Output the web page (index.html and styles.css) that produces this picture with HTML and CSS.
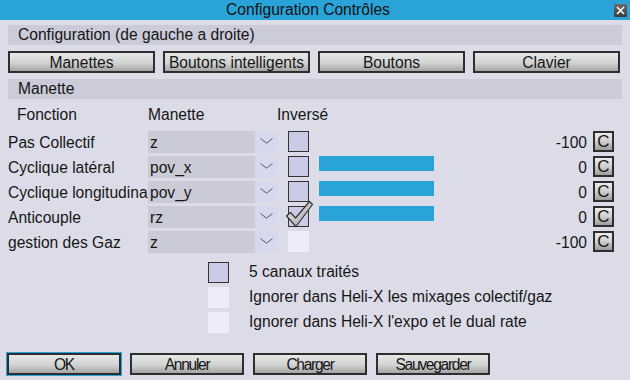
FILE: index.html
```html
<!DOCTYPE html>
<html lang="fr">
<head>
    <meta charset="UTF-8">
    <title>Configuration Contrôles</title>
    <link rel="stylesheet" href="styles.css">
</head>
<body>
    <div class="window">
        <div class="titlebar">
            <span class="title">Configuration Contrôles</span>
            <span class="close">
                <svg width="13" height="13" viewBox="0 0 13 13">
                    <path d="M3 3 L10 10 M10 3 L3 10" stroke="#fff" stroke-width="1.6" fill="none"/>
                </svg>
            </span>
        </div>
        <div class="content">
            <div class="section-head">Configuration (de gauche a droite)</div>
            <div class="tabs">
                <button class="btn">Manettes</button>
                <button class="btn">Boutons intelligents</button>
                <button class="btn">Boutons</button>
                <button class="btn">Clavier</button>
            </div>
            <div class="section-head">Manette</div>
            <div class="col-heads">
                <span class="head-fn">Fonction</span>
                <span class="head-axis">Manette</span>
                <span class="head-inv">Inversé</span>
            </div>

            <div class="channel">
                <span class="ch-name">Pas Collectif</span>
                <div class="select"><span class="select-value">z</span><span class="select-arrow"><svg width="13" height="6" viewBox="0 0 13 6"><path d="M0.5 0.5 L6.5 5.2 L12.5 0.5" stroke="#5a5a5a" fill="none"/></svg></span></div>
                <span class="invert"></span>
                <span class="bar bar-off"></span>
                <span class="value">-100</span>
                <button class="cbtn">C</button>
            </div>
            <div class="channel">
                <span class="ch-name">Cyclique latéral</span>
                <div class="select"><span class="select-value">pov_x</span><span class="select-arrow"><svg width="13" height="6" viewBox="0 0 13 6"><path d="M0.5 0.5 L6.5 5.2 L12.5 0.5" stroke="#5a5a5a" fill="none"/></svg></span></div>
                <span class="invert"></span>
                <span class="bar"></span>
                <span class="value">0</span>
                <button class="cbtn">C</button>
            </div>
            <div class="channel">
                <span class="ch-name">Cyclique longitudinal</span>
                <div class="select"><span class="select-value">pov_y</span><span class="select-arrow"><svg width="13" height="6" viewBox="0 0 13 6"><path d="M0.5 0.5 L6.5 5.2 L12.5 0.5" stroke="#5a5a5a" fill="none"/></svg></span></div>
                <span class="invert"></span>
                <span class="bar"></span>
                <span class="value">0</span>
                <button class="cbtn">C</button>
            </div>
            <div class="channel">
                <span class="ch-name">Anticouple</span>
                <div class="select"><span class="select-value">rz</span><span class="select-arrow"><svg width="13" height="6" viewBox="0 0 13 6"><path d="M0.5 0.5 L6.5 5.2 L12.5 0.5" stroke="#5a5a5a" fill="none"/></svg></span></div>
                <span class="invert checked">
                    <svg class="tick" width="29" height="28" viewBox="0 0 29 28">
                        <defs>
                            <linearGradient id="tickfill" x1="0" y1="0" x2="1" y2="1">
                                <stop offset="0" stop-color="#f4f4f4"/>
                                <stop offset="1" stop-color="#9a9a9a"/>
                            </linearGradient>
                        </defs>
                        <path d="M1.5 16 L5.5 12.5 L10.5 18 L24.5 1.5 L27.5 4.5 L11 26.5 Z" fill="url(#tickfill)" stroke="#333" stroke-width="1.2" stroke-linejoin="round"/>
                    </svg>
                </span>
                <span class="bar"></span>
                <span class="value">0</span>
                <button class="cbtn">C</button>
            </div>
            <div class="channel">
                <span class="ch-name">gestion des Gaz</span>
                <div class="select"><span class="select-value">z</span><span class="select-arrow"><svg width="13" height="6" viewBox="0 0 13 6"><path d="M0.5 0.5 L6.5 5.2 L12.5 0.5" stroke="#5a5a5a" fill="none"/></svg></span></div>
                <span class="invert disabled"></span>
                <span class="bar bar-off"></span>
                <span class="value">-100</span>
                <button class="cbtn">C</button>
            </div>

            <div class="options">
                <label class="option"><span class="box"></span>5 canaux traités</label>
                <label class="option"><span class="box disabled"></span>Ignorer dans Heli-X les mixages colectif/gaz</label>
                <label class="option"><span class="box disabled"></span>Ignorer dans Heli-X l'expo et le dual rate</label>
            </div>

            <div class="actions">
                <button class="btn focused">OK</button>
                <button class="btn">Annuler</button>
                <button class="btn">Charger</button>
                <button class="btn">Sauvegarder</button>
            </div>
        </div>
    </div>
</body>
</html>
```

FILE: styles.css
```css
body {
    margin: 0;
    padding: 0;
    background: #dcdce8;
    font-family: "Liberation Sans", Arial, sans-serif;
    font-size: 15.6px;
    color: #161616;
}
.window {
    width: 630px;
    height: 380px;
    background: #dcdce8;
}
.titlebar {
    position: relative;
    height: 20px;
    line-height: 20px;
    padding-right: 14px;
    background: #2aa4d8;
    text-align: center;
    color: #111;
}
.close {
    position: absolute;
    right: 3px;
    top: 4px;
    width: 13px;
    height: 13px;
    background: linear-gradient(#6a6a6a, #3c3c3c);
    border-radius: 1px;
}
.close svg {
    display: block;
}
.content {
    padding: 5px 8px 0 8px;
}
.section-head {
    height: 20px;
    line-height: 20px;
    background: #cbcbd9;
    padding-left: 10px;
}
.tabs {
    display: grid;
    grid-template-columns: repeat(4, 147px);
    column-gap: 8px;
    margin: 6px 0;
}
.btn {
    height: 22px;
    padding: 0;
    border: 2px solid #2e2e2e;
    background: linear-gradient(#e6e7e7, #d2d3d3 55%, #a4a4a4);
    font-family: inherit;
    font-size: 15.6px;
    color: #161616;
    line-height: 17px;
}
.col-heads {
    display: flex;
    height: 32px;
    line-height: 32px;
}
.head-fn {
    width: 131px;
    padding-left: 9px;
}
.head-axis {
    width: 129px;
}
.channel {
    display: flex;
    align-items: flex-start;
    height: 22px;
    margin-bottom: 3px;
    line-height: 23px;
}
.ch-name {
    width: 140px;
    white-space: nowrap;
    overflow: hidden;
}
.select {
    display: flex;
    width: 130px;
    height: 22px;
}
.select-value {
    width: 105px;
    padding-left: 2px;
    background: #cbcbd7;
}
.select-arrow {
    width: 23px;
    background: #d7d7ee;
    display: flex;
    justify-content: center;
    padding-top: 7px;
    box-sizing: border-box;
}
.select-arrow svg {
    display: block;
}
.invert {
    position: relative;
    width: 19px;
    height: 19px;
    margin-left: 10px;
    border: 1px solid #333;
    background: #cbcbe8;
}
.invert.disabled {
    border-color: transparent;
    background: #ececfa;
}
.tick {
    position: absolute;
    left: -4px;
    top: -7px;
}
.bar {
    width: 115px;
    height: 15px;
    margin-left: 10px;
    background: #2aa4d8;
}
.bar-off {
    visibility: hidden;
}
.value {
    flex: 1;
    text-align: right;
    padding-right: 6px;
}
.cbtn {
    width: 21px;
    height: 21px;
    margin-right: 8px;
    padding: 0;
    border: 2px solid #2e2e2e;
    background: linear-gradient(#ececec, #cfcfcf 50%, #9c9c9c);
    font-family: inherit;
    font-size: 17px;
    line-height: 16px;
    color: #161616;
}
.options {
    display: flex;
    flex-direction: column;
    gap: 5px;
    padding: 6px 0 0 200px;
}
.option {
    display: flex;
    align-items: center;
    height: 20px;
}
.box {
    width: 19px;
    height: 19px;
    margin-right: 20px;
    border: 1px solid #333;
    background: #cbcbe8;
}
.box.disabled {
    border-color: transparent;
    background: #ececfa;
}
.actions {
    display: flex;
    gap: 9px;
    margin-top: 21px;
    margin-left: -1px;
}
.actions .btn {
    width: 114px;
    letter-spacing: -1.3px;
}
.actions .focused {
    outline: 1px solid #2aa4d8;
}
```
